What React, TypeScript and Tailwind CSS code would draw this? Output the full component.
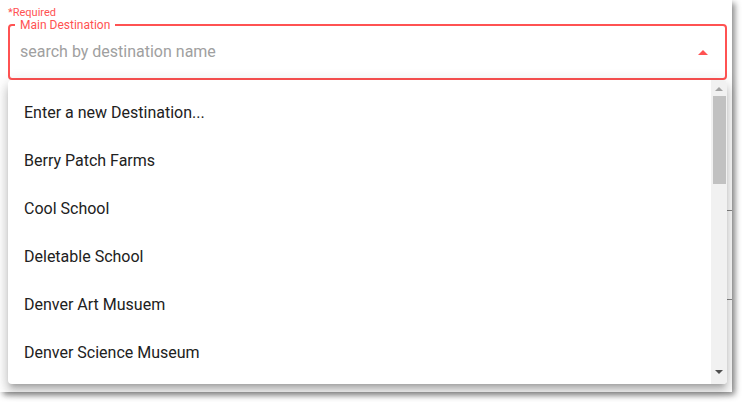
const items = [
  "Enter a new Destination...",
  "Berry Patch Farms",
  "Cool School",
  "Deletable School",
  "Denver Art Musuem",
  "Denver Science Museum",
];

function MenuUp() {
  return (
    <svg width="24" height="24" viewBox="0 0 24 24" className="text-[#ff5252]">
      <path d="M7,15L12,10L17,15H7Z" fill="currentColor" />
    </svg>
  );
}

function Scrollbar() {
  return (
    <div className="absolute right-0 top-0 bottom-0 w-4 bg-[#f1f1f1] flex flex-col">
      <div className="h-[16px] flex items-center justify-center">
        <svg width="8" height="5" viewBox="0 0 8 5">
          <path d="M0,5L4,1L8,5Z" fill="#a3a3a3" />
        </svg>
      </div>
      <div className="h-[88px] ml-[2px] mr-px bg-[#c1c1c1]" />
      <div className="flex-1" />
      <div className="h-[14px] flex items-start justify-center">
        <svg width="8" height="5" viewBox="0 0 8 5">
          <path d="M0,0L8,0L4,4Z" fill="#505050" />
        </svg>
      </div>
    </div>
  );
}

export default function App() {
  return (
    <div className="w-[742px] h-[402px] bg-white font-['Roboto',sans-serif]">
      <div className="relative w-[732px] h-[392px] bg-white shadow-[3px_3px_6px_rgba(0,0,0,0.45)] px-2 pt-[8px]">
        {/* page lines hidden behind the menu */}
        <div className="absolute left-[600px] top-[210px] w-[132px] h-px bg-[#8a8a8a]" />
        <div className="absolute left-[600px] top-[299px] w-[132px] h-px bg-[#8a8a8a]" />

        <div className="text-[11px] leading-[10px] text-[#ff5252]">*Required</div>

        <div className="relative mt-[6px] w-[719px] h-[56px] border-2 border-[#ff5252] rounded-[4px] flex items-center pl-[10px] pr-[10px]">
          <span className="absolute left-[5px] top-[-6px] px-[5px] bg-white text-[12px] leading-[10px] text-[#ff5252]">
            Main Destination
          </span>
          <div className="flex-1 text-[16px] text-[#a0a0a0]">search by destination name</div>
          <MenuUp />
        </div>

        <div className="relative z-10 w-[719px] h-[304px] bg-white rounded-[4px] overflow-hidden shadow-[0_5px_5px_-3px_rgba(0,0,0,0.2),0_8px_10px_1px_rgba(0,0,0,0.14),0_3px_14px_2px_rgba(0,0,0,0.12)]">
          <div className="py-2 pr-4">
            {items.map((item) => (
              <div key={item} className="h-12 px-4 pt-px flex items-center text-[16px] text-[#212121]">
                {item}
              </div>
            ))}
          </div>
          <Scrollbar />
        </div>
      </div>
    </div>
  );
}
